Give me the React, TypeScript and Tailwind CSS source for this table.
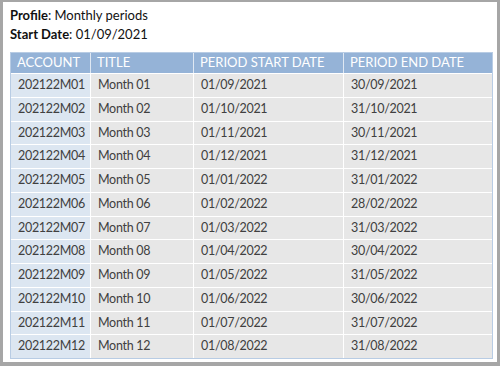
const rows = Array.from({ length: 12 }, (_, i) => {
  const n = String(i + 1).padStart(2, '0');
  const start = [
    '01/09/2021', '01/10/2021', '01/11/2021', '01/12/2021', '01/01/2022', '01/02/2022',
    '01/03/2022', '01/04/2022', '01/05/2022', '01/06/2022', '01/07/2022', '01/08/2022',
  ][i];
  const end = [
    '30/09/2021', '31/10/2021', '30/11/2021', '31/12/2021', '31/01/2022', '28/02/2022',
    '31/03/2022', '30/04/2022', '31/05/2022', '30/06/2022', '31/07/2022', '31/08/2022',
  ][i];
  return { account: `202122M${n}`, title: `Month ${n}`, start, end };
});

const cols = 'grid grid-cols-[79px_103px_150px_149px]';

export default function App() {
  return (
    <div className="h-[366px] w-[500px] border-x-[3px] border-t-2 border-b-4 border-[#a6a6a6] bg-white font-['Lato','Open_Sans',sans-serif] text-[#111]">
      <div className="px-[7px] pt-[4px]">
        <div className="text-[13px] leading-[19px]">
          <div>
            <span className="font-bold">Profile</span>: Monthly periods
          </div>
          <div>
            <span className="font-bold">Start Date</span>: 01/09/2021
          </div>
        </div>
        <div className="mt-[8px] w-[483px] border border-[#b8cce4]">
          <div className={`${cols} h-[20px] bg-[#95b3d7] text-[13px] text-white`}>
            {['ACCOUNT', 'TITLE', 'PERIOD START DATE', 'PERIOD END DATE'].map((h, i) => (
              <div
                key={h}
                className={`flex items-center pl-[6px] ${i > 0 ? 'border-l border-white/70' : ''}`}
              >
                {h}
              </div>
            ))}
          </div>
          {rows.map((r) => (
            <div
              key={r.account}
              className={`${cols} h-[23.75px] border-t border-white text-[12.5px] tracking-[-0.3px] text-[#404040]`}
            >
              <div className="flex items-center bg-[#dce6f1] pl-[7px]">{r.account}</div>
              <div className="flex items-center border-l border-white bg-[#e7e7e7] pl-[7px]">{r.title}</div>
              <div className="flex items-center border-l border-white bg-[#e7e7e7] pl-[7px]">{r.start}</div>
              <div className="flex items-center border-l border-white bg-[#e7e7e7] pl-[7px]">{r.end}</div>
            </div>
          ))}
        </div>
      </div>
    </div>
  );
}
